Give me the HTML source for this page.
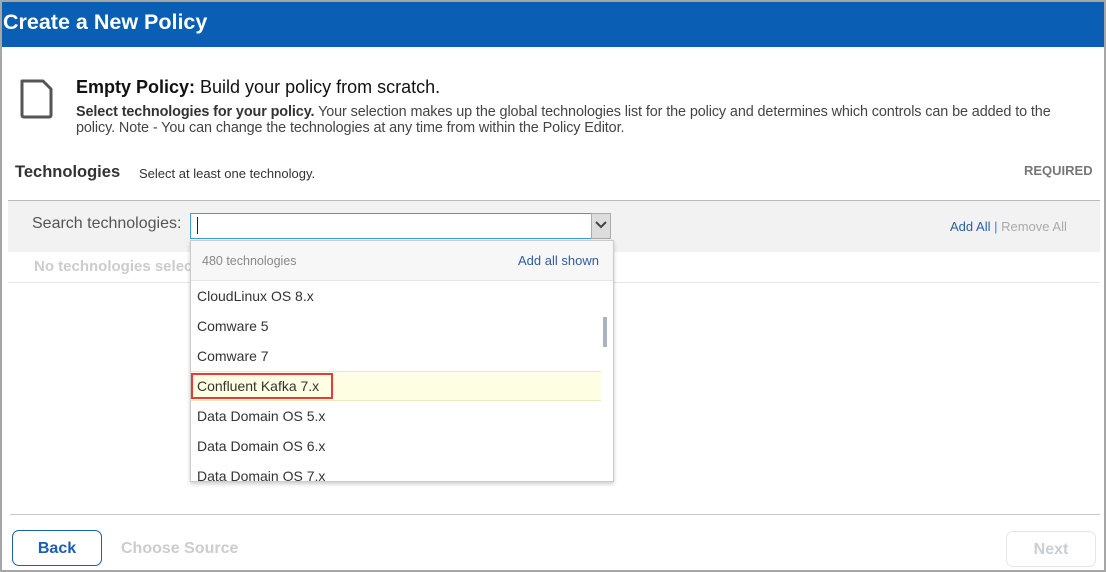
<!DOCTYPE html>
<html><head><meta charset="utf-8"><style>
*{margin:0;padding:0;box-sizing:border-box}
body{width:1106px;height:572px;overflow:hidden;background:#fff;font-family:"Liberation Sans",Arial,sans-serif;position:relative}
.frame{position:absolute;left:0;top:0;width:1106px;height:572px;border:2px solid #a6a6a6}
.hdr{position:absolute;left:2px;top:2px;width:1102px;height:45px;background:#0a5fb4;color:#fff;font-weight:bold;font-size:21.5px;line-height:40px;padding-left:1px}
.a{position:absolute;white-space:nowrap}
.item{position:absolute;left:191px;width:410px;height:30px;line-height:30px;padding-left:6px;font-size:14px;color:#333}
</style></head><body>
<div class="frame"></div>
<div class="hdr">Create a New Policy</div>
<svg class="a" style="left:19px;top:78px" width="36" height="42"><path d="M3 3 H24 L32 11 V37 Q32 39 30 39 H5 Q3 39 3 37 Z" fill="none" stroke="#555" stroke-width="3" stroke-linejoin="round"/></svg>
<div class="a" style="left:76px;top:77px;font-size:18px;color:#111"><b>Empty Policy:</b> Build your policy from scratch.</div>
<div class="a" style="left:76px;top:104px;font-size:14.4px;color:#444;line-height:16px;white-space:normal;width:1000px;letter-spacing:-0.1px"><b style="color:#333">Select technologies for your policy.</b> Your selection makes up the global technologies list for the policy and determines which controls can be added to the policy. Note - You can change the technologies at any time from within the Policy Editor.</div>
<div class="a" style="left:15px;top:163px;font-size:16.5px;font-weight:bold;color:#333">Technologies</div>
<div class="a" style="left:139px;top:166px;font-size:13px;color:#333">Select at least one technology.</div>
<div class="a" style="left:1024px;top:163px;font-size:13px;font-weight:bold;color:#777">REQUIRED</div>
<div class="a" style="left:8px;top:200px;width:1092px;height:52px;background:#f2f2f2;border-top:1px solid #bbb"></div>
<div class="a" style="left:32px;top:215px;font-size:16px;color:#555">Search technologies:</div>
<div class="a" style="left:190px;top:213px;width:402px;height:26px;background:#fff;border:1px solid #3c9be6"></div>
<div class="a" style="left:197px;top:217px;width:1px;height:17px;background:#222"></div>
<div class="a" style="left:591px;top:213px;width:20px;height:26px;background:#ddd;border:1px solid #aaa"></div>
<svg class="a" style="left:595px;top:221px" width="12" height="8"><path d="M1 1 L6 6 L11 1" fill="none" stroke="#444" stroke-width="2"/></svg>
<div class="a" style="left:950px;top:219px;font-size:13px;color:#2a5ea8">Add All <span style="color:#3c7fd0">|</span> <span style="color:#aaa">Remove All</span></div>
<div class="a" style="left:34px;top:258px;font-size:15px;font-weight:bold;color:#ccc">No technologies selected</div>
<div class="a" style="left:8px;top:282px;width:1092px;height:1px;background:#e6e6e6"></div>
<div class="a" style="left:190px;top:240px;width:424px;height:242px;background:#fff;border:1px solid #ccc;box-shadow:0 2px 4px rgba(0,0,0,.2);overflow:hidden">
 <div class="a" style="left:0;top:0;width:424px;height:40px;background:#f7f7f7;border-bottom:1px solid #e6e6e6"></div>
 <div class="a" style="left:11px;top:13px;font-size:12.5px;color:#888">480 technologies</div>
 <div class="a" style="left:327px;top:12px;font-size:13px;color:#2a5ea8">Add all shown</div>
</div>
<div class="item" style="top:281px">CloudLinux OS 8.x</div>
<div class="item" style="top:311px">Comware 5</div>
<div class="item" style="top:341px">Comware 7</div>
<div class="item" style="top:371px;background:#fefee2;border-top:1px solid #eee8c0;border-bottom:1px solid #eee8c0;line-height:28px">Confluent Kafka 7.x</div>
<div class="a" style="left:191px;top:373px;width:142px;height:26px;border:2px solid #e53b3b"></div>
<div class="item" style="top:401px">Data Domain OS 5.x</div>
<div class="item" style="top:431px">Data Domain OS 6.x</div>
<div class="item" style="top:461px;height:20px;overflow:hidden">Data Domain OS 7.x</div>
<div class="a" style="left:603px;top:317px;width:4px;height:30px;background:#a9b4c0"></div>
<div class="a" style="left:10px;top:514px;width:1090px;height:1px;background:#c8c8c8"></div>
<div class="a" style="left:12px;top:530px;width:90px;height:36px;border:1px solid #1a5fb0;border-radius:7px;text-align:center;line-height:35px;font-size:16px;font-weight:bold;color:#1a5fb0">Back</div>
<div class="a" style="left:121px;top:540px;font-size:16px;font-weight:bold;color:#ccc">Choose Source</div>
<div class="a" style="left:1006px;top:531px;width:90px;height:36px;border:1px solid #e6e6e6;border-radius:7px;text-align:center;line-height:35px;font-size:16px;font-weight:bold;color:#c8ced4">Next</div>
</body></html>
